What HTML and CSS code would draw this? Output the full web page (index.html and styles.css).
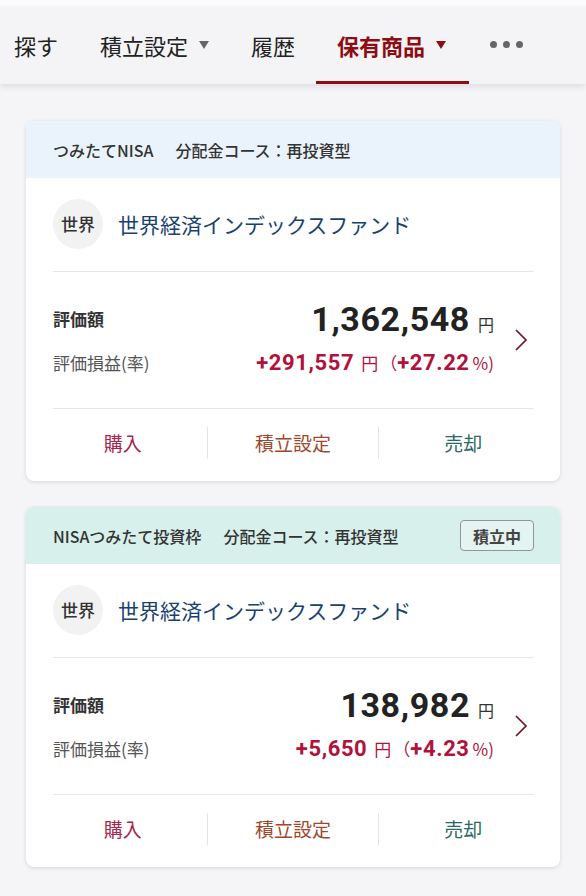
FILE: index.html
```html
<!DOCTYPE html>
<html lang="ja">
<head>
<meta charset="utf-8">
<title>保有商品</title>
<link rel="stylesheet" href="styles.css">
</head>
<body>
<nav class="tabs">
  <div class="tab first">探す</div>
  <div class="tab">積立設定<span class="caret"></span></div>
  <div class="tab">履歴</div>
  <div class="tab active">保有商品<span class="caret"></span></div>
  <div class="tab more"><span class="dot"></span><span class="dot"></span><span class="dot"></span></div>
</nav>

<main class="list">
  <section class="card">
    <header class="card-head blue">
      <span class="head-text">つみたてNISA<span class="sp"></span>分配金コース：再投資型</span>
    </header>
    <div class="fund">
      <div class="badge-circle">世界</div>
      <div class="fund-name">世界経済インデックスファンド</div>
    </div>
    <div class="values">
      <div class="rows">
        <div class="row top">
          <span class="label strong">評価額</span>
          <span class="amount"><b class="big">1,362,548</b><span class="yen">円</span></span>
        </div>
        <div class="row">
          <span class="label">評価損益(率)</span>
          <span class="gain"><b>+291,557</b><span class="unit">円</span><span class="paren">（</span><b>+27.22</b><span class="pct">%)</span></span>
        </div>
      </div>
      <svg class="chev" width="14" height="24" viewBox="0 0 14 24"><polyline points="2,2 12,12 2,22" fill="none" stroke="#6e1426" stroke-width="1.7"/></svg>
    </div>
    <div class="actions">
      <div class="act buy">購入</div>
      <div class="act plan">積立設定</div>
      <div class="act sell">売却</div>
    </div>
  </section>

  <section class="card">
    <header class="card-head mint">
      <span class="head-text">NISAつみたて投資枠<span class="sp"></span>分配金コース：再投資型</span>
      <span class="status">積立中</span>
    </header>
    <div class="fund">
      <div class="badge-circle">世界</div>
      <div class="fund-name">世界経済インデックスファンド</div>
    </div>
    <div class="values">
      <div class="rows">
        <div class="row top">
          <span class="label strong">評価額</span>
          <span class="amount"><b class="big">138,982</b><span class="yen">円</span></span>
        </div>
        <div class="row">
          <span class="label">評価損益(率)</span>
          <span class="gain"><b>+5,650</b><span class="unit">円</span><span class="paren">（</span><b>+4.23</b><span class="pct">%)</span></span>
        </div>
      </div>
      <svg class="chev" width="14" height="24" viewBox="0 0 14 24"><polyline points="2,2 12,12 2,22" fill="none" stroke="#6e1426" stroke-width="1.7"/></svg>
    </div>
    <div class="actions">
      <div class="act buy">購入</div>
      <div class="act plan">積立設定</div>
      <div class="act sell">売却</div>
    </div>
  </section>
</main>
</body>
</html>
```

FILE: styles.css
```css
* { box-sizing: border-box; }
html, body { margin: 0; padding: 0; }
body {
  background: #f5f5f7;
  font-family: "Noto Sans CJK JP", "Noto Sans", sans-serif;
  color: #222;
  width: 586px;
  height: 896px;
  overflow: hidden;
}

.tabs {
  display: flex;
  align-items: stretch;
  height: 84px;
  background: #f4f4f6;
  border-top: 6px solid #fbfbfc;
  box-shadow: 0 3px 6px rgba(0,0,0,0.09);
  position: relative;
}
.tab {
  display: flex;
  align-items: center;
  padding: 0 21px;
  font-size: 22px;
  line-height: 1;
  color: #222;
  border-bottom: 3px solid transparent;
  padding-top: 2px;
  white-space: nowrap;
}
.tab.first { padding-left: 14px; }
.tab.active {
  color: #8e0c12;
  font-weight: 700;
  border-bottom-color: #8e0c12;
  padding-right: 23px;
}
.caret {
  display: inline-block;
  width: 0; height: 0;
  margin-left: 11px;
  border-left: 5px solid transparent;
  border-right: 5px solid transparent;
  border-top: 8px solid #666;
}
.tab.active .caret { border-top-color: #8e0c12; }
.tab.more { gap: 6px; padding-left: 21px; }
.dot {
  width: 7px; height: 7px;
  border-radius: 50%;
  background: #666;
}

.list {
  padding: 37px 26px 0;
  display: flex;
  flex-direction: column;
  gap: 26px;
}
.card {
  background: #fff;
  border-radius: 8px;
  box-shadow: 0 1px 4px rgba(0,0,0,0.13);
  overflow: hidden;
}
.card-head {
  height: 57px;
  display: flex;
  align-items: center;
  justify-content: space-between;
  padding: 0 26px 0 27px;
}
.card-head.blue { background: #eaf3fc; }
.card-head.mint { background: #d8f0ec; }
.head-text {
  font-size: 16px;
  font-weight: 500;
  color: #333;
}
.sp { display: inline-block; width: 22px; }
.status {
  width: 74px;
  height: 31px;
  border: 1.5px solid #8c9896;
  border-radius: 4px;
  background: #e4f4f1;
  display: flex;
  align-items: center;
  justify-content: center;
  font-size: 16px;
  font-weight: 700;
  color: #444;
}

.fund {
  margin: 0 26px 0 27px;
  height: 94px;
  display: flex;
  align-items: center;
  gap: 15px;
  padding-bottom: 2px;
  border-bottom: 1.5px solid #e6e6e6;
}
.badge-circle {
  width: 50px; height: 50px;
  border-radius: 50%;
  background: #f2f2f3;
  display: flex;
  align-items: center;
  justify-content: center;
  font-size: 17px;
  font-weight: 500;
  color: #333;
}
.fund-name {
  font-size: 21px;
  color: #1a426e;
}

.values {
  margin: 0 26px 0 27px;
  height: 137px;
  display: flex;
  align-items: center;
  border-bottom: 1.5px solid #e6e6e6;
}
.rows {
  flex: 1;
  display: flex;
  flex-direction: column;
  gap: 11px;
  padding-bottom: 7px;
}
.row {
  display: flex;
  align-items: baseline;
  justify-content: space-between;
}
.row.top { align-items: center; }
.label {
  font-size: 17px;
  color: #555;
}
.label.strong { font-weight: 700; color: #333; }
.amount { display: flex; align-items: baseline; }
.big {
  font-family: Roboto, "Liberation Sans", sans-serif;
  font-size: 34px;
  font-weight: 700;
  color: #222;
  letter-spacing: 0.6px;
}
.yen {
  font-size: 16px;
  color: #333;
  margin-left: 8px;
}
.gain {
  display: flex;
  align-items: baseline;
  color: #b0123c;
}
.gain b {
  font-family: Roboto, "Liberation Sans", sans-serif;
  font-size: 22px;
  font-weight: 700;
  letter-spacing: 0.6px;
}
.gain .unit { font-size: 17px; margin-left: 7px; }
.gain .paren { font-size: 17px; margin-left: 2px; }
.gain .pct { font-size: 17px; margin-left: 3px; }
.chev { margin-left: 20px; margin-right: 6px; flex: none; }

.actions {
  display: flex;
  height: 72px;
  align-items: center;
  margin: 0 12px;
  padding-bottom: 4px;
}
.act {
  flex: 1;
  text-align: center;
  font-size: 19px;
  line-height: 32px;
}
.act + .act { border-left: 1.5px solid #e4e4e4; }
.buy { color: #a3264c; }
.plan { color: #a0482c; }
.sell { color: #2a6a66; }
```
